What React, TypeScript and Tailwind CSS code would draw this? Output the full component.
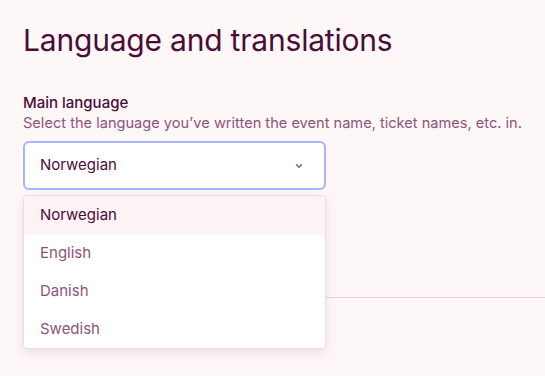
import React from "react";

const options = ["Norwegian", "English", "Danish", "Swedish"];

const App = () => {
  return (
    <div
      className="min-h-[376px] w-[545px] overflow-hidden bg-[#fef7f8] pl-[23px] pr-6 pt-5"
      style={{ fontFamily: "Inter, 'Noto Sans', sans-serif" }}
    >
      <h1 className="text-[30px] leading-[40px] font-normal tracking-[-0.2px] text-[#4b0c37]">
        Language and translations
      </h1>

      <div className="mt-[33px]">
        <div className="text-[15px] leading-[20px] font-medium text-[#4b0c37]">
          Main language
        </div>
        <div className="text-[14.6px] leading-[20px] text-[#8d5479] whitespace-nowrap">
          Select the language you’ve written the event name, ticket names, etc. in.
        </div>

        <div className="relative mt-[8px] w-[303px]">
          <button className="flex h-[49px] w-full items-center justify-between rounded-[6px] border-2 border-[#aab4fb] bg-white pl-[15px] pr-[20px] text-[15px] text-[#4b0c37]">
            <span>Norwegian</span>
            <svg width="10" height="10" viewBox="0 0 10 10" fill="none">
              <path
                d="M2.5 3.8 L5 6.2 L7.5 3.8"
                stroke="#8d5479"
                strokeWidth="1.4"
                strokeLinecap="round"
                strokeLinejoin="round"
              />
            </svg>
          </button>

          <div className="absolute left-0 top-[54px] z-10 w-full overflow-hidden rounded-[4px] border border-[#eadde3] bg-white shadow-[0_4px_12px_rgba(120,40,80,0.12)]">
            {options.map((o, i) => (
              <div
                key={o}
                className={
                  i === 0
                    ? "flex h-[38px] items-center bg-[#fdf2f4] px-[16px] text-[15px] text-[#4b0c37]"
                    : "flex h-[38px] items-center px-[16px] text-[15px] text-[#8d5479]"
                }
              >
                {o}
              </div>
            ))}
          </div>
        </div>

        <div className="mt-[107px] -mr-6 border-t border-[#e8d6df]" />
      </div>
    </div>
  );
};

export default App;
